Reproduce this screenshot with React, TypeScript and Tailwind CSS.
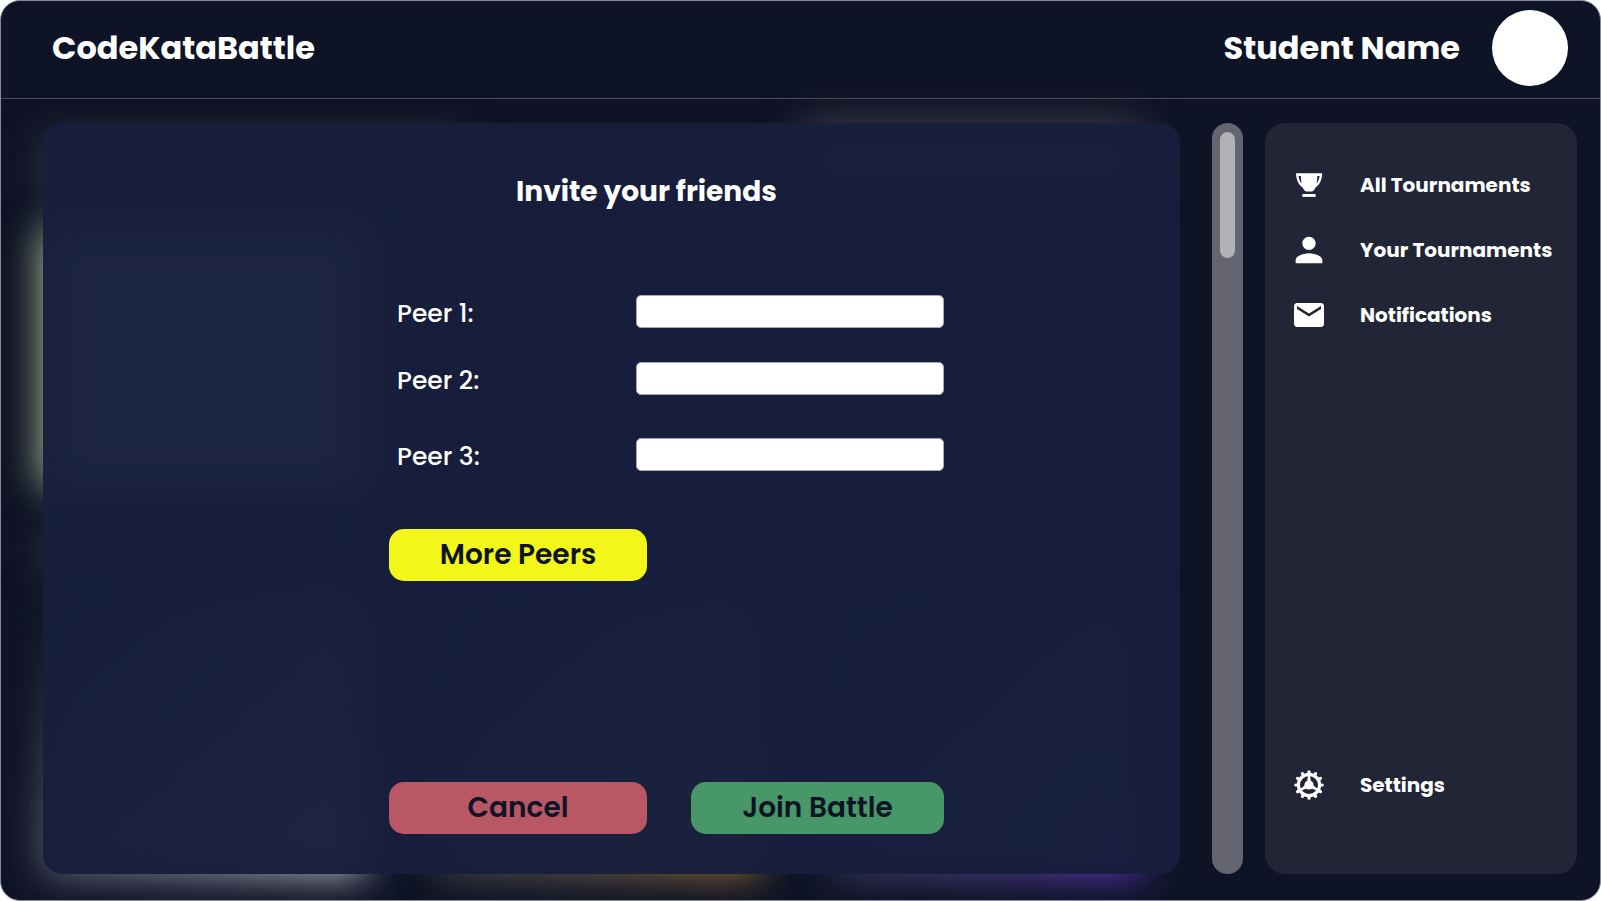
import type { ReactNode } from "react";
import { MdEmail, MdPerson } from "react-icons/md";

function TrophyIcon() {
  return (
    <svg viewBox="4 5 30 30" className="size-[30px]" fill="currentColor" aria-hidden="true">
      <path
        fillRule="evenodd"
        d="M6 8.2H32.2C32 14.5 29.8 19.6 26 21.9C24.8 24.2 23.4 25.8 22 26.6H16.2C14.8 25.8 13.4 24.2 12.2 21.9C8.400 19.600 6.200 14.500 6 8.200ZM8.600 11C9 14.300 10 16.800 11.600 18.400C11.100 16 10.900 13.500 10.900 11ZM29.600 11H27.300C27.300 13.500 27.100 16 26.600 18.400C28.200 16.800 29.200 14.300 29.600 11Z"
      />
      <rect x="12.400" y="29" width="13.200" height="2.900" />
    </svg>
  );
}

const TEETH = [0, 30, 60, 90, 120, 150, 180, 210, 240, 270, 300, 330];

function GearIcon() {
  return (
    <svg viewBox="-15 -15 30 30" className="size-[30px]" fill="none" stroke="currentColor" aria-hidden="true">
      <circle r="10.600" strokeWidth="3.200" />
      {TEETH.map((angle) => (
        <path key={angle} d="M0 -11V-13.200" strokeWidth="3.200" strokeLinecap="round" transform={`rotate(${angle})`} />
      ))}
      {[0, 120, 240].map((angle) => (
        <path key={angle} d="M-1 -10H1L2 -2H-2Z" fill="currentColor" stroke="none" transform={`rotate(${angle})`} />
      ))}
      <circle r="4.600" fill="currentColor" stroke="none" />
    </svg>
  );
}

function NavItem({ icon, label }: { icon: ReactNode; label: string }) {
  return (
    <a href="#" className="flex h-[30px] items-center gap-9 text-xl font-bold whitespace-nowrap">
      <span className="flex size-[30px] shrink-0 items-center justify-center">{icon}</span>
      {label}
    </a>
  );
}

function PeerField({ id, label }: { id: string; label: string }) {
  return (
    <div className="flex h-[33px] items-center justify-between pl-2">
      <label htmlFor={id} className="pt-1 text-[25px] leading-[33px] font-medium">
        {label}
      </label>
      <input id={id} type="text" className="h-[33px] w-[308px] rounded-[5px] border border-[#a3a6b3] bg-white px-2 text-lg text-[#0e1325]" />
    </div>
  );
}

function Glows() {
  return (
    <div aria-hidden="true">
      <div className="absolute top-3 left-0 h-16 w-[420px] bg-[#343843] blur-[20px]" />
      <div className="absolute top-[105px] left-0 h-[260px] w-[322px] bg-[#b9c9a0] blur-[20px]" />
      <div className="absolute top-[412px] left-0 h-9 w-[300px] bg-[#40444e] blur-[20px]" />
      <div className="absolute top-[470px] bottom-0 left-0 w-[322px] bg-linear-to-br from-[#1b2030] from-10% to-[#d8d8e4] blur-[20px]" />
      <div className="absolute top-[470px] bottom-0 left-[395px] w-[322px] bg-linear-to-br from-[#1b2030] from-10% via-[#5b5651] via-60% to-[#ad7830] blur-[20px]" />
      <div className="absolute top-[470px] right-[36px] bottom-0 w-[312px] bg-linear-to-br from-[#1b2030] from-10% via-[#4a4278] via-60% to-[#6a36dc] blur-[20px]" />
      <div className="absolute top-0 right-[36px] h-[76px] w-[342px] bg-[#403f4d] blur-[20px]" />
    </div>
  );
}

export default function App() {
  return (
    <div className="min-h-screen bg-white font-['Poppins','Inter',sans-serif]">
      <div className="flex min-h-screen flex-col overflow-hidden rounded-[20px] border border-[#868892] bg-[#0e1325] text-white">
        <header className="flex h-[98px] items-center justify-between border-b border-[#4a4c55] pr-8 pb-[3px] pl-[51px]">
          <h1 className="text-[32px] leading-10 font-bold">CodeKataBattle</h1>
          <div className="flex items-center gap-8">
            <span className="text-[32px] leading-10 font-bold">Student Name</span>
            <span className="size-[76px] rounded-full bg-white" />
          </div>
        </header>

        <div className="flex flex-1 pt-6 pr-[23px] pb-[26px] pl-[42px]">
          <main className="relative flex flex-1">
            <Glows />
            <section className="relative flex flex-1 flex-col rounded-[20px] bg-[#171f3c]/97 pt-12 pr-[236px] pb-10 pl-[346px]">
              <h2 className="pl-[127px] text-[28px] leading-[42px] font-bold whitespace-nowrap">Invite your friends</h2>
              <form className="flex flex-1 flex-col pt-[82px]" onSubmit={(event) => event.preventDefault()}>
                <div className="flex flex-col gap-[34px]">
                  <PeerField id="peer-1" label="Peer 1:" />
                  <PeerField id="peer-2" label="Peer 2:" />
                </div>
                <div className="pt-[43px]">
                  <PeerField id="peer-3" label="Peer 3:" />
                </div>
                <button type="button" className="mt-[58px] h-[52px] w-[258px] rounded-[15px] bg-[#f2f619] text-[28px] font-semibold text-[#0e1325]">
                  More Peers
                </button>
                <div className="mt-auto flex justify-between">
                  <button type="button" className="h-[52px] w-[258px] rounded-[15px] bg-[#b95765] text-[28px] font-semibold text-[#0e1325]">
                    Cancel
                  </button>
                  <button type="submit" className="h-[52px] w-[253px] rounded-[15px] bg-[#479768] text-[28px] font-semibold text-[#0e1325]">
                    Join Battle
                  </button>
                </div>
              </form>
            </section>
          </main>

          <div className="ml-8 w-[31px] rounded-full bg-[#646570] px-2 py-[9px]">
            <div className="h-[126px] rounded-full bg-[#b1b2b7]" />
          </div>

          <aside className="ml-[22px] w-[312px] rounded-[20px] bg-[#222536]">
            <nav className="flex h-full flex-col gap-[35px] pt-[47px] pb-[74px] pl-[29px]">
              <NavItem icon={<TrophyIcon />} label="All Tournaments" />
              <NavItem icon={<MdPerson className="size-10 shrink-0" />} label="Your Tournaments" />
              <NavItem icon={<MdEmail className="size-9 shrink-0" />} label="Notifications" />
              <div className="mt-auto">
                <NavItem icon={<GearIcon />} label="Settings" />
              </div>
            </nav>
          </aside>
        </div>
      </div>
    </div>
  );
}
